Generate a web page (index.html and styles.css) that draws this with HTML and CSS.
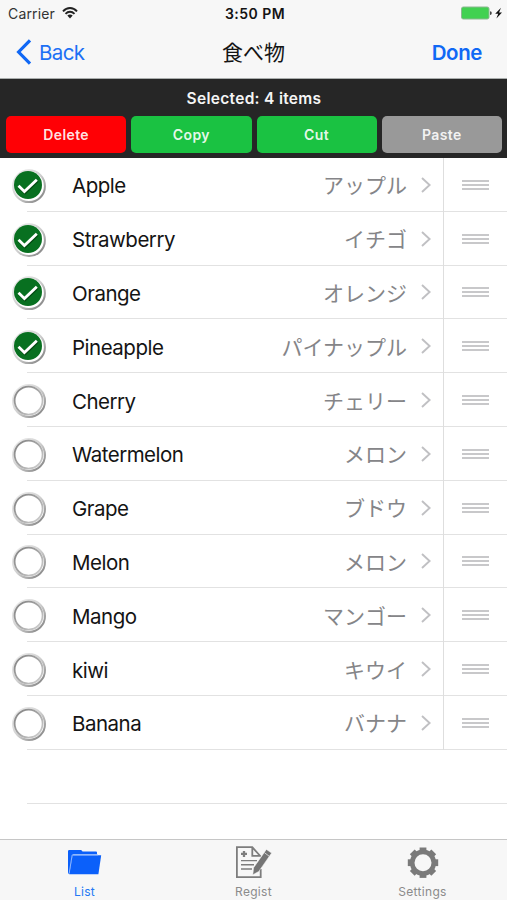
FILE: index.html
```html
<!DOCTYPE html>
<html lang="en">
<head>
<meta charset="utf-8">
<title>食べ物</title>
<link rel="stylesheet" href="styles.css">
</head>
<body>
<svg class="defs" width="0" height="0" aria-hidden="true">
  <defs>
    <linearGradient id="bezel" x1="0" y1="0" x2="1" y2="1">
      <stop offset="0" stop-color="#eeeeee"/><stop offset=".5" stop-color="#d0d0d0"/><stop offset="1" stop-color="#777777"/>
    </linearGradient>
    <linearGradient id="inner" x1="0" y1="0" x2="1" y2="1">
      <stop offset="0" stop-color="#808080"/><stop offset=".55" stop-color="#aaaaaa"/><stop offset="1" stop-color="#d4d4d4"/>
    </linearGradient>
    <symbol id="off" viewBox="0 0 36 36">
      <circle cx="18" cy="18" r="16" fill="#fff" stroke="url(#bezel)" stroke-width="2"/>
      <circle cx="17.6" cy="17.6" r="14" fill="#fff" stroke="url(#inner)" stroke-width="1.8"/>
    </symbol>
    <symbol id="on" viewBox="0 0 36 36">
      <circle cx="18" cy="18.2" r="15.9" fill="#fff" stroke="url(#bezel)" stroke-width="2"/>
      <circle cx="17" cy="17" r="14" fill="#087020"/>
      <path d="M8.2 19.2l5.8 5.5L26.6 12.8" fill="none" stroke="#044a12" stroke-width="2.8"/>
      <path d="M7.5 17.8l5.9 5.8L25.8 11.7" fill="none" stroke="#fff" stroke-width="2.8"/>
    </symbol>
    <symbol id="chev" viewBox="0 0 10 16"><path d="M1 1l7.6 7L1 15" fill="none" stroke="#c0c0c3" stroke-width="1.9"/></symbol>
  </defs>
</svg>
<div class="phone">
  <header class="top">
    <div class="status">
      <div class="carrier"><span>Carrier</span>
        <svg width="16" height="12" viewBox="0 0 16 12"><path d="M1 4.4C5-.1 11-.1 15 4.4M3.5 6.9c2.7-2.9 6.3-2.9 9 0" fill="none" stroke="#222" stroke-width="1.9"/><path d="M5.3 8.6c1.6-1.6 3.8-1.6 5.4 0L8 11.4z" fill="#222"/></svg>
      </div>
      <b class="time">3:50 PM</b>
      <svg class="battery" width="42" height="14" viewBox="0 0 42 14"><rect x="1.5" y="1" width="27.5" height="12" rx="1.8" fill="#41d151" stroke="#8bb890"/><path d="M30 5.2q1.8 0 1.8 1.9T30 9z" fill="#444"/><path d="M41 1.8l-5.8 6h3l-1.8 4.8 5.6-6.1h-3z" fill="#111"/></svg>
    </div>
    <nav class="nav">
      <a class="back"><svg width="16" height="26" viewBox="0 0 16 26"><path d="M14 1.3L2.6 13 14 24.7" fill="none" stroke="#1068f5" stroke-width="3.2"/></svg><span>Back</span></a>
      <h1>食べ物</h1>
      <a class="done">Done</a>
    </nav>
  </header>
  <section class="actions">
    <p>Selected: 4 items</p>
    <div class="buttons"><button class="red">Delete</button><button class="green">Copy</button><button class="green">Cut</button><button class="gray">Paste</button></div>
  </section>
  <main class="list">
    <div class="row"><svg class="check"><use href="#on"/></svg><span class="name">Apple</span><span class="kana">アップル</span><svg class="chev"><use href="#chev"/></svg><i class="grip"></i></div>
    <div class="row"><svg class="check"><use href="#on"/></svg><span class="name">Strawberry</span><span class="kana">イチゴ</span><svg class="chev"><use href="#chev"/></svg><i class="grip"></i></div>
    <div class="row"><svg class="check"><use href="#on"/></svg><span class="name">Orange</span><span class="kana">オレンジ</span><svg class="chev"><use href="#chev"/></svg><i class="grip"></i></div>
    <div class="row"><svg class="check"><use href="#on"/></svg><span class="name">Pineapple</span><span class="kana">パイナップル</span><svg class="chev"><use href="#chev"/></svg><i class="grip"></i></div>
    <div class="row"><svg class="check"><use href="#off"/></svg><span class="name">Cherry</span><span class="kana">チェリー</span><svg class="chev"><use href="#chev"/></svg><i class="grip"></i></div>
    <div class="row"><svg class="check"><use href="#off"/></svg><span class="name">Watermelon</span><span class="kana">メロン</span><svg class="chev"><use href="#chev"/></svg><i class="grip"></i></div>
    <div class="row"><svg class="check"><use href="#off"/></svg><span class="name">Grape</span><span class="kana">ブドウ</span><svg class="chev"><use href="#chev"/></svg><i class="grip"></i></div>
    <div class="row"><svg class="check"><use href="#off"/></svg><span class="name">Melon</span><span class="kana">メロン</span><svg class="chev"><use href="#chev"/></svg><i class="grip"></i></div>
    <div class="row"><svg class="check"><use href="#off"/></svg><span class="name">Mango</span><span class="kana">マンゴー</span><svg class="chev"><use href="#chev"/></svg><i class="grip"></i></div>
    <div class="row"><svg class="check"><use href="#off"/></svg><span class="name">kiwi</span><span class="kana">キウイ</span><svg class="chev"><use href="#chev"/></svg><i class="grip"></i></div>
    <div class="row"><svg class="check"><use href="#off"/></svg><span class="name">Banana</span><span class="kana">バナナ</span><svg class="chev"><use href="#chev"/></svg><i class="grip"></i></div>
    <div class="row"></div>
  </main>
  <footer class="tabs">
    <a class="tab active"><svg width="36" height="34" viewBox="0 0 36 34"><path d="M1 27.5V5.2Q1 4 2.2 4h11.6q1.2 0 1.7 1.5H29q1 0 1 1v2H6.2L2.5 27.5z" fill="#0b60fa"/><path d="M5.6 9.2H34.2L31.4 28.3H2.2z" fill="#0b60fa"/><path d="M2.2 27L5.2 8.9H31" fill="none" stroke="#9fc2ff" stroke-width=".9"/></svg><span>List</span></a>
    <a class="tab"><svg width="36" height="34" viewBox="0 0 36 34"><g fill="none" stroke="#7d7d7d" stroke-width="1.8"><path d="M24.7 10.5L16.3 1.2H.9V31.2H24.7V23M16.3 1.5V9.8H24"/><path d="M5 7.9h6M8 4.9v6" stroke-width="2.3"/><path d="M5 14.6h16M5 18.8h13M5 23h11" stroke-width="1.4"/></g><path d="M30.4 3.4l5.2 3.7L22.8 25.4l-6 3.4.8-7.1z" fill="#757575" stroke="#f7f7f7" stroke-width=".5"/><path d="M28.4 6.7l4.8 3.5" stroke="#f7f7f7" stroke-width=".7"/></svg><span>Regist</span></a>
    <a class="tab"><svg width="36" height="34" viewBox="0 0 36 34"><g transform="translate(18 16.7)" fill="#7a7a7a"><g id="teeth"><path id="tooth" d="M-3.4-15.2h6.8v5h-6.8z"/><use href="#tooth" transform="rotate(45)"/><use href="#tooth" transform="rotate(90)"/><use href="#tooth" transform="rotate(135)"/></g><use href="#teeth" transform="rotate(180)"/><circle r="10.8" fill="none" stroke="#7a7a7a" stroke-width="4.6"/></g></svg><span>Settings</span></a>
  </footer>
</div>
</body>
</html>
```
FILE: styles.css
```css
*, *::before { box-sizing: border-box; }
body { margin: 0; background: #fff; font-family: Inter, "Noto Sans CJK JP", sans-serif; color: #141414; }
svg { display: block; flex: none; }
.defs { position: absolute; }
.phone { width: 507px; height: 900px; display: flex; flex-direction: column; overflow: hidden; }
.top { height: 79px; background: #f7f7f7; border-bottom: 1px solid #aaaead; flex: none; }
.status { height: 26px; display: grid; grid-template-columns: 1fr auto 1fr; align-items: center; padding: 1px 5px 0 8px; }
.carrier { display: flex; align-items: center; gap: 7px; font-size: 14px; letter-spacing: .15px; color: #333; }
.carrier svg { margin-top: -1px; }
.time { font-size: 14px; font-weight: 600; letter-spacing: .45px; }
.battery { justify-self: end; margin-top: -1px; }
.nav { height: 52px; display: grid; grid-template-columns: minmax(0, 1fr) auto minmax(0, 1fr); align-items: center; padding: 0 16px; }
.back { display: flex; align-items: center; gap: 7px; font-size: 20.5px; letter-spacing: -.6px; color: #1c70f5; }
h1 { margin: -2px 0 0; font: 400 21px/30px "Noto Sans CJK JP", sans-serif; }
.done { justify-self: end; margin-right: 9px; font-size: 20.5px; font-weight: 600; letter-spacing: -.4px; color: #1068f5; }
.actions { height: 79px; background: #262626; padding: 9px 5px 0 6px; flex: none; }
.actions p { margin: 0; height: 28px; line-height: 21px; text-align: center; color: #f5f5f5; font-size: 15.5px; font-weight: 600; letter-spacing: .3px; }
.buttons { display: grid; grid-template-columns: repeat(4, 1fr); gap: 5px; }
button { height: 37px; border: 0; border-radius: 5px; padding: 0; color: rgba(255,255,255,.9); font: 600 14px Inter, sans-serif; letter-spacing: .4px; }
.red { background: #ff0005; }
.green { background: #1ac242; }
.gray { background: #999; }
.list { flex: 1; min-height: 0; overflow: hidden; }
.row { height: 53.8px; display: flex; align-items: center; padding-left: 11px; background: linear-gradient(#e2e2e2, #e2e2e2) 27px 100% / 100% 1px no-repeat; }
.check { width: 36px; height: 36px; margin-top: 2px; }
.name { margin: 2px 0 0 25px; flex: 1; font-size: 20.5px; letter-spacing: -.5px; }
.kana { margin-top: -1px; font: 400 21px/30px "Noto Sans CJK JP", sans-serif; color: #858588; }
.chev { width: 10px; height: 16px; margin: 0 12px 0 14px; }
.grip { align-self: stretch; width: 64px; border-left: 1px solid #dedede; display: flex; align-items: center; justify-content: center; }
.grip::before { content: ""; width: 27px; height: 10px; border: solid #c8c8ca; border-width: 2px 0; background: linear-gradient(#c8c8ca, #c8c8ca) center / 100% 2px no-repeat; }
.tabs { height: 61px; flex: none; display: grid; grid-template-columns: repeat(3, 1fr); background: #f7f7f7; border-top: 1px solid #c6c6c6; }
.tab { display: flex; flex-direction: column; align-items: center; padding-top: 6px; gap: 4px; color: #8b8b8b; font-size: 12px; line-height: 16px; letter-spacing: .3px; }
.active { color: #2478f5; }
```
